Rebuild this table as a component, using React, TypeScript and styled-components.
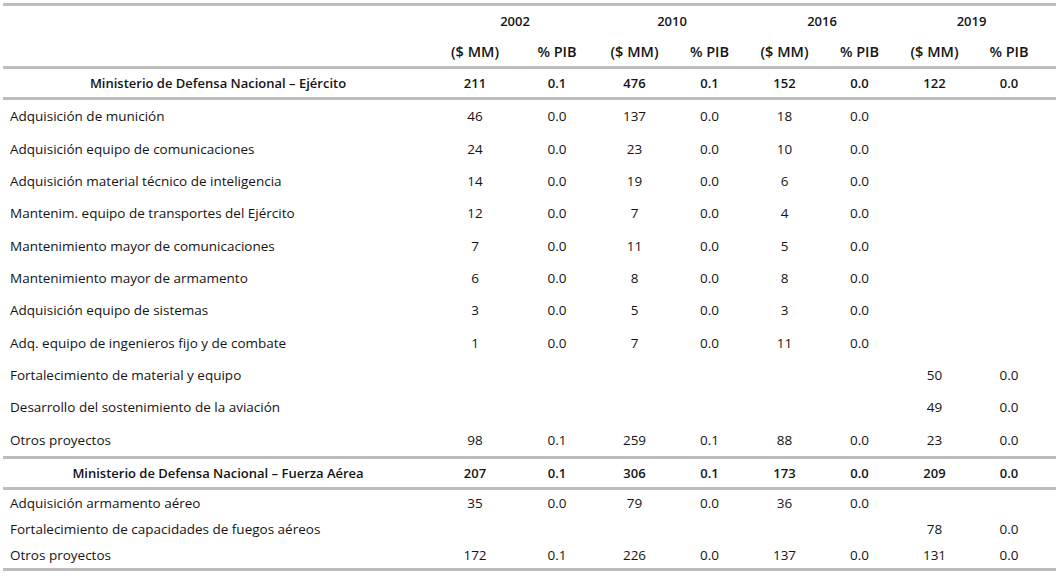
import React from "react";
import styled, { createGlobalStyle } from "styled-components";

const GlobalStyle = createGlobalStyle`
  html, body {
    margin: 0;
    padding: 0;
    background: #ffffff;
  }
  body {
    font-family: "Open Sans", "Noto Sans", "DejaVu Sans", sans-serif;
    font-size: 13.5px;
    color: #141414;
  }
`;

const COLS = "430px 84px 80px 75px 75px 75px 75px 75px 84px";

const Table = styled.div`
  width: 1053px;
  margin: 3px 0 0 3px;
`;

const Rule = styled.div`
  height: 3px;
  background-color: #bdbdbd;
`;

const HeaderBlock = styled.div`
  display: grid;
  grid-template-columns: ${COLS};
  grid-template-rows: 30px 30px;
  font-weight: 600;
`;

const YearCell = styled.div<{ $col: number }>`
  grid-row: 1;
  grid-column: ${(p) => `${p.$col} / span 2`};
  display: flex;
  align-items: center;
  justify-content: center;
  font-size: 13px;
  padding-right: ${(p) => (p.$col === 8 ? "10px" : "0")};
`;

const UnitCell = styled.div<{ $col: number }>`
  grid-row: 2;
  grid-column: ${(p) => p.$col};
  display: flex;
  align-items: center;
  justify-content: center;
  font-size: 14.5px;
  padding-top: 1px;
  padding-right: ${(p) => (p.$col === 9 ? "10px" : "0")};
`;

const Row = styled.div<{ $h: number; $bold?: boolean }>`
  display: grid;
  grid-template-columns: ${COLS};
  height: ${(p) => p.$h}px;
  align-items: center;
  font-weight: ${(p) => (p.$bold ? 600 : 400)};
  font-size: ${(p) => (p.$bold ? "13px" : "13.5px")};
`;

const Label = styled.div<{ $center?: boolean }>`
  padding-left: ${(p) => (p.$center ? "0" : "7px")};
  text-align: ${(p) => (p.$center ? "center" : "left")};
  white-space: nowrap;
`;

const Num = styled.div<{ $last?: boolean }>`
  text-align: center;
  padding-right: ${(p) => (p.$last ? "10px" : "0")};
`;

type Line = { label: string; v: (string | null)[] };

const ejercito: Line = {
  label: "Ministerio de Defensa Nacional – Ejército",
  v: ["211", "0.1", "476", "0.1", "152", "0.0", "122", "0.0"],
};

const ejercitoRows: Line[] = [
  { label: "Adquisición de munición", v: ["46", "0.0", "137", "0.0", "18", "0.0", null, null] },
  { label: "Adquisición equipo de comunicaciones", v: ["24", "0.0", "23", "0.0", "10", "0.0", null, null] },
  { label: "Adquisición material técnico de inteligencia", v: ["14", "0.0", "19", "0.0", "6", "0.0", null, null] },
  { label: "Mantenim. equipo de transportes del Ejército", v: ["12", "0.0", "7", "0.0", "4", "0.0", null, null] },
  { label: "Mantenimiento mayor de comunicaciones", v: ["7", "0.0", "11", "0.0", "5", "0.0", null, null] },
  { label: "Mantenimiento mayor de armamento", v: ["6", "0.0", "8", "0.0", "8", "0.0", null, null] },
  { label: "Adquisición equipo de sistemas", v: ["3", "0.0", "5", "0.0", "3", "0.0", null, null] },
  { label: "Adq. equipo de ingenieros fijo y de combate", v: ["1", "0.0", "7", "0.0", "11", "0.0", null, null] },
  { label: "Fortalecimiento de material y equipo", v: [null, null, null, null, null, null, "50", "0.0"] },
  { label: "Desarrollo del sostenimiento de la aviación", v: [null, null, null, null, null, null, "49", "0.0"] },
  { label: "Otros proyectos", v: ["98", "0.1", "259", "0.1", "88", "0.0", "23", "0.0"] },
];

const aerea: Line = {
  label: "Ministerio de Defensa Nacional – Fuerza Aérea",
  v: ["207", "0.1", "306", "0.1", "173", "0.0", "209", "0.0"],
};

const aereaRows: Line[] = [
  { label: "Adquisición armamento aéreo", v: ["35", "0.0", "79", "0.0", "36", "0.0", null, null] },
  { label: "Fortalecimiento de capacidades de fuegos aéreos", v: [null, null, null, null, null, null, "78", "0.0"] },
  { label: "Otros proyectos", v: ["172", "0.1", "226", "0.0", "137", "0.0", "131", "0.0"] },
];

const years = ["2002", "2010", "2016", "2019"];

function DataRow({ line, h, bold }: { line: Line; h: number; bold?: boolean }) {
  return (
    <Row $h={h} $bold={bold}>
      <Label $center={bold}>{line.label}</Label>
      {line.v.map((x, i) => (
        <Num key={i} $last={i === 7}>
          {x ?? ""}
        </Num>
      ))}
    </Row>
  );
}

function App() {
  return (
    <>
      <GlobalStyle />
      <Table>
        <Rule />
        <HeaderBlock>
          {years.map((y, i) => (
            <YearCell key={y} $col={2 + i * 2}>
              {y}
            </YearCell>
          ))}
          {years.map((y, i) => (
            <React.Fragment key={"u" + y}>
              <UnitCell $col={2 + i * 2}>{"($ MM)"}</UnitCell>
              <UnitCell $col={3 + i * 2}>{"% PIB"}</UnitCell>
            </React.Fragment>
          ))}
        </HeaderBlock>
        <Rule />
        <DataRow line={ejercito} h={28} bold />
        <Rule />
        {ejercitoRows.map((r, i) => (
          <DataRow key={i} line={r} h={32.36} />
        ))}
        <Rule />
        <DataRow line={aerea} h={28} bold />
        <Rule />
        {aereaRows.map((r, i) => (
          <DataRow key={i} line={r} h={26} />
        ))}
        <Rule />
      </Table>
    </>
  );
}

export default App;
